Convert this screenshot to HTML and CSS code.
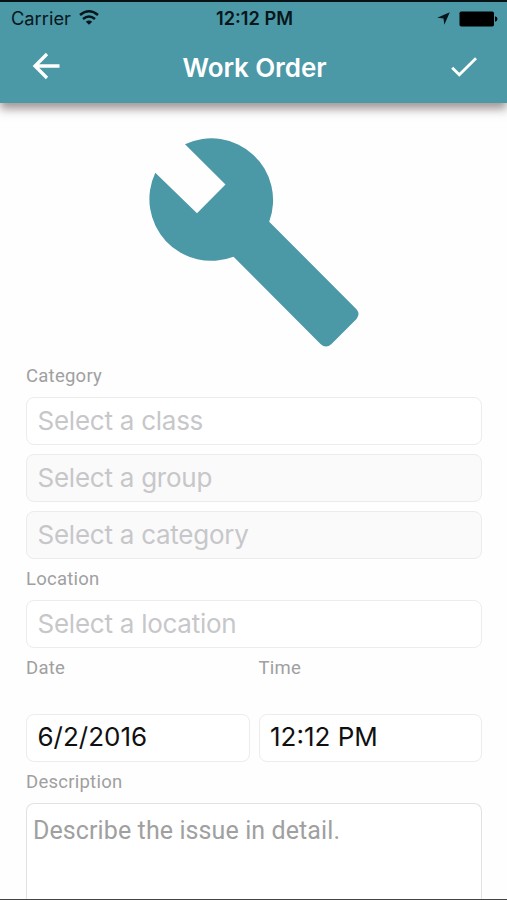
FILE: index.html
```
<!DOCTYPE html>
<html lang="en">
<head>
<meta charset="utf-8">
<title>Work Order</title>
<link rel="stylesheet" href="styles.css">
</head>
<body>
<div class="screen">
  <header class="header">
    <div class="status">
      <div class="status-left">
        <span class="carrier">Carrier</span>
        <svg class="wifi" width="20" height="15" viewBox="0 0 20 15" fill="none" stroke="#06161a" stroke-width="2.5"><path d="M1 5Q10-2.4 19 5M4 9Q10 4 16 9"/><path d="M6.8 11.8Q10 9 13.2 11.8L10 14.8Z" fill="#06161a" stroke="none"/></svg>
      </div>
      <span class="clock">12:12 PM</span>
      <div class="status-right">
        <svg width="13" height="13" viewBox="0 0 13 13"><path d="M12.8.2 7.3 12.8 6.5 6.6.2 5.7Z" fill="#06161a"/></svg>
        <svg width="39" height="16" viewBox="0 0 39 16"><rect x=".5" y=".5" width="34.5" height="15" rx="1.8"/><path d="M36 5.3q2.5.6 2.5 2.7T36 10.7Z"/></svg>
      </div>
    </div>
    <div class="navbar">
      <svg width="28" height="28" viewBox="0 0 28 28" fill="none" stroke="#fff" stroke-width="3.3"><path d="M27.5 14H3M15 2 3 14l12 12"/></svg>
      <h1 class="title">Work Order</h1>
      <svg class="check" width="26" height="20" viewBox="0 0 26 20" fill="none" stroke="#fff" stroke-width="2.8"><path d="M1.2 10.8 8.3 17.8 25 1.2"/></svg>
    </div>
  </header>
  <main class="form">
    <svg class="wrench" width="210" height="210" viewBox="149 138 210 210"><path fill="#4b98a7" d="M185 144.2A61.8 61.8 0 0 1 269.2 221.7L356.5 309.2Q360.5 314 356.5 319L331.5 344Q326 349 320.5 344L233.5 256.7A61.8 61.8 0 0 1 155.3 172.7L197 213.3 225.5 184.5Z"/></svg>
    <label class="label">Category</label>
    <div class="field select">Select a class</div>
    <div class="field select disabled">Select a group</div>
    <div class="field select disabled">Select a category</div>
    <label class="label">Location</label>
    <div class="field select">Select a location</div>
    <div class="columns">
      <div class="column"><label class="label">Date</label><div class="field value">6/2/2016</div></div>
      <div class="column"><label class="label">Time</label><div class="field value">12:12 PM</div></div>
    </div>
    <label class="label">Description</label>
    <div class="textarea">Describe the issue in detail.</div>
  </main>
</div>
</body>
</html>
```
FILE: styles.css
```
* { box-sizing: border-box; }
body { margin: 0; background: #fff; font-family: Inter, sans-serif; }
.screen {
  display: flex; flex-direction: column;
  width: 507px; height: 900px; overflow: hidden;
  background: #fefefe; border-bottom: 1px solid #444;
}
.header {
  flex: none; height: 103px; background: #4b98a7;
  border-top: 2px solid #071216;
  box-shadow: 0 6px 9px rgba(70, 50, 50, .5);
}
.status {
  display: grid; grid-template-columns: 1fr auto 1fr; align-items: center;
  height: 32px; padding: 0 9px 0 11px;
  font-size: 18.3px; line-height: 31px; color: #06161a;
}
.status-left, .status-right { display: flex; align-items: center; }
.status-left { gap: 8px; }
.status-right { justify-content: flex-end; gap: 9px; }
.wifi { margin-bottom: 3px; }
.clock { font-weight: 600; font-size: 18.2px; line-height: 33px; }
.navbar {
  display: grid; grid-template-columns: 1fr auto 1fr; align-items: center;
  height: 64px; padding: 0 30px 0 32px;
}
.check { justify-self: end; margin-top: 2px; }
.title { margin: 4px 0 0; font-size: 26px; font-weight: 600; line-height: 32px; letter-spacing: -.1px; color: #fff; }
.form { flex: 1; display: flex; flex-direction: column; padding: 35px 25px 0 26px; }
.wrench { flex: none; margin: 0 0 17px 123px; }
.label {
  display: block; flex: none; height: 22px; margin-bottom: 10px;
  font-family: Roboto, sans-serif; font-size: 18.5px; line-height: 22px;
  letter-spacing: .25px; color: #a0a0a0;
}
.field {
  flex: none; height: 48px; margin-bottom: 9px; padding: 0 10.5px;
  border: 1.5px solid #ececec; border-radius: 8px; background: #fff;
  font-size: 26px; line-height: 44px; color: #101010; white-space: nowrap;
}
.select { line-height: 46px; letter-spacing: -.25px; color: #c7c7ca; }
.disabled { background: #fafafa; }
.columns { display: grid; grid-template-columns: 1fr 1fr; gap: 9px; }
.column .label { margin-bottom: 35px; }
.textarea {
  flex: 1; padding: 11px 5px 0 6px; border: 1.5px solid #e2e2e2; border-bottom: 0;
  border-radius: 8px 8px 0 0; background: #fff;
  font-family: Roboto, sans-serif; font-size: 25px; line-height: 32px;
  letter-spacing: .1px; color: #a0a0a0;
}
```
